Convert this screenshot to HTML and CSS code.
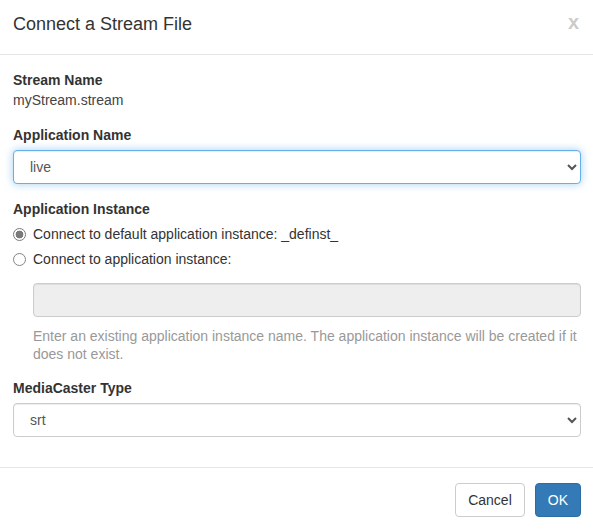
FILE: index.html
```html
<!DOCTYPE html>
<html>
<head>
<meta charset="utf-8">
<link rel="stylesheet" href="styles.css">
</head>
<body>
<div class="modal">
  <div class="modal-header">
    <h4 class="modal-title">Connect a Stream File</h4>
    <button class="close" type="button">x</button>
  </div>
  <div class="modal-body">
    <div class="form-group">
      <label class="control-label">Stream Name</label>
      <div class="static">myStream.stream</div>
    </div>
    <div class="form-group">
      <label class="control-label">Application Name</label>
      <select class="form-control focused"><option>live</option></select>
    </div>
    <div class="form-group">
      <label class="control-label">Application Instance</label>
      <label class="radio"><input type="radio" name="inst" checked><span>Connect to default application instance: _definst_</span></label>
      <label class="radio"><input type="radio" name="inst"><span>Connect to application instance:</span></label>
      <div class="indent">
        <input class="form-control" type="text" disabled>
        <div class="help-block">Enter an existing application instance name. The application instance will be created if it does not exist.</div>
      </div>
    </div>
    <div class="form-group">
      <label class="control-label">MediaCaster Type</label>
      <select class="form-control"><option>srt</option></select>
    </div>
  </div>
  <div class="modal-footer">
    <button class="btn btn-default" type="button">Cancel</button>
    <button class="btn btn-primary" type="button">OK</button>
  </div>
</div>
</body>
</html>
```

FILE: styles.css
```css
* { box-sizing: border-box; }
html, body { margin: 0; padding: 0; background: #fff; }
body {
  font-family: "Liberation Sans", Arial, sans-serif;
  font-size: 14px;
  line-height: 20px;
  color: #333;
}
.modal { width: 593px; }
.modal-header {
  display: flex;
  align-items: flex-start;
  justify-content: space-between;
  padding: 11px 13px 17px 13px;
  border-bottom: 1px solid #e5e5e5;
  height: 55px;
}
.modal-title {
  margin: 0;
  font-size: 18px;
  font-weight: normal;
  line-height: 26px;
  color: #333;
}
.close {
  margin: 0;
  padding: 0;
  border: 0;
  background: none;
  font-family: "Liberation Sans", Arial, sans-serif;
  font-size: 20px;
  font-weight: bold;
  line-height: 22px;
  color: #000;
  opacity: 0.2;
  margin-right: 1px;
}
.modal-body { padding: 15px 12px 15px 13px; }
.form-group { margin-bottom: 15px; }
.control-label {
  display: block;
  font-weight: bold;
  margin-bottom: 5px;
  color: #333;
}
.static { color: #444; margin-top: -5px; }
.form-control {
  display: block;
  width: 100%;
  height: 34px;
  padding: 6px 12px;
  font-family: inherit;
  font-size: 14px;
  line-height: 20px;
  color: #555;
  background: #fff;
  border: 1px solid #ccc;
  border-radius: 4px;
  box-shadow: inset 0 1px 1px rgba(0,0,0,.075);
  margin: 0;
}
select.form-control { padding-left: 12px; }
.form-control.focused {
  border-color: #66afe9;
  outline: 0;
  box-shadow: inset 0 1px 1px rgba(0,0,0,.075), 0 0 8px rgba(102,175,233,.6);
}
.form-control[disabled] { background: #eee; }
.radio {
  display: flex;
  align-items: center;
  gap: 7px;
  margin-bottom: 5px;
  color: #333;
  font-weight: normal;
}
.radio input {
  appearance: none;
  -webkit-appearance: none;
  width: 13px;
  height: 13px;
  margin: 0;
  border: 1px solid #858585;
  border-radius: 50%;
  background: #fff;
  flex: none;
  position: relative;
  top: 0;
}
.radio input:checked {
  border-color: #7a7a7a;
  background: radial-gradient(circle, #7a7a7a 0 3.6px, #fff 4.2px);
}
.indent { padding-left: 20px; padding-top: 9px; }
.help-block {
  margin-top: 10px;
  color: #999;
  line-height: 18px;
  margin-bottom: 2px;
}
.modal-footer {
  display: flex;
  justify-content: flex-end;
  gap: 10px;
  padding: 15px 12px 15px 13px;
  border-top: 1px solid #e5e5e5;
}
.btn {
  display: inline-block;
  height: 34px;
  padding: 6px 12px;
  font-family: inherit;
  font-size: 14px;
  line-height: 20px;
  border: 1px solid transparent;
  border-radius: 4px;
  margin: 0;
}
.btn-default { color: #333; background: #fff; border-color: #ccc; }
.btn-primary { color: #fff; background: #337ab7; border-color: #2e6da4; }
```
